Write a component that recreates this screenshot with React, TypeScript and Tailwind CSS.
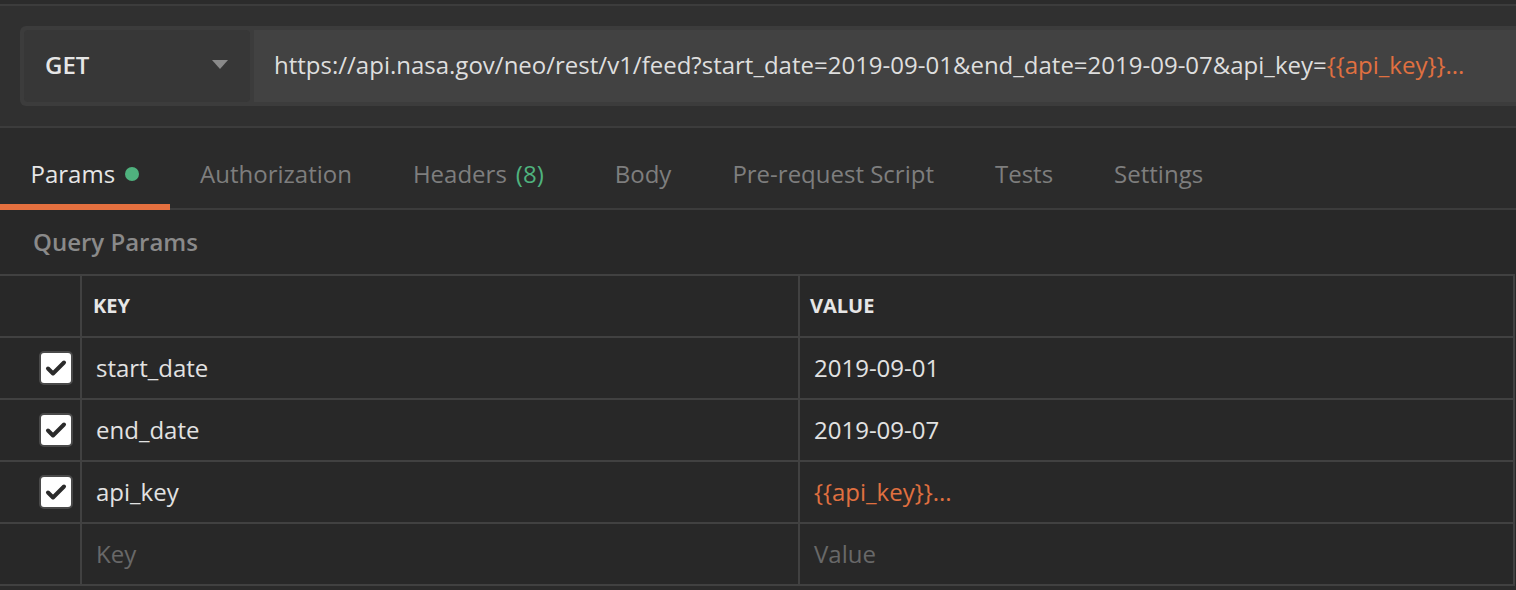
import React from "react";

const tabs = [
  { label: "Params", active: true, dot: true },
  { label: "Authorization" },
  { label: "Headers", count: "(8)" },
  { label: "Body" },
  { label: "Pre-request Script" },
  { label: "Tests" },
  { label: "Settings" },
];

const rows = [
  { key: "start_date", value: "2019-09-01" },
  { key: "end_date", value: "2019-09-07" },
  { key: "api_key", value: "{{api_key}}...", variable: true },
];

function Check() {
  return (
    <div className="w-[34px] h-[34px] rounded-[5px] bg-white border-2 border-[#4a4a4a] flex items-center justify-center">
      <svg width="24" height="24" viewBox="0 0 24 24">
        <path d="M4 12.5l5 5L20 6.5" fill="none" stroke="#2b2b2b" strokeWidth="4" strokeLinecap="round" strokeLinejoin="round" />
      </svg>
    </div>
  );
}

export default function App() {
  return (
    <div className="w-[1516px] h-[590px] overflow-hidden bg-[#2b2b2b] font-['Open_Sans',sans-serif]">
      <div className="h-1 bg-[#2b2b2b]" />
      {/* request bar */}
      <div className="h-[124px] bg-[#303030] border-t-2 border-b-2 border-[#3c3c3c] pt-[20px] pl-[20px]">
        <div className="flex h-[80px] bg-[#3c3c3c] rounded-l-[6px] p-1 pr-0">
          <div className="w-[226px] bg-[#373737] rounded-[4px] flex items-center justify-between pl-[21px] pr-[22px] pb-[2px]">
            <span className="text-[24px] font-semibold text-[#e6e6e6]">GET</span>
            <svg width="16" height="10" viewBox="0 0 16 10">
              <path d="M0 0h16L8 9z" fill="#8a8a8a" />
            </svg>
          </div>
          <div className="flex-1 ml-1 bg-[#424242] flex items-center pl-[20px] pb-[2px] text-[24px] text-[#dedede] whitespace-nowrap">
            https://api.nasa.gov/neo/rest/v1/feed?start_date=2019-09-01&amp;end_date=2019-09-07&amp;api_key=
            <span className="text-[#e07040]">{"{{api_key}}"}</span>
            <span className="text-[#e07040]">...</span>
          </div>
        </div>
      </div>

      {/* tabs */}
      <div className="flex h-[82px] bg-[#2b2b2b] border-b-2 border-[#3c3c3c]">
        {tabs.map((t) => (
          <div
            key={t.label}
            className={
              "flex items-center px-[30.5px] text-[24px] border-b-[6px] -mb-[2px] pt-[16px] " +
              (t.active ? "border-[#e5703f] text-[#e6e6e6]" : "border-transparent text-[#7e7e7e]")
            }
          >
            {t.label}
            {t.dot && <span className="ml-[10px] w-[14px] h-[14px] rounded-full bg-[#4fb27e]" />}
            {t.count && <span className="ml-[9px] mr-[10px] text-[#4fb27e]">{t.count}</span>}
          </div>
        ))}
      </div>

      <div className="bg-[#282828]">
        <div className="h-[64px] flex items-center pl-[33px] text-[24px] font-semibold text-[#8a8a8a]">Query Params</div>

        <div className="w-[1515px] border-t-2 border-r-2 border-[#414141] text-[24px]">
          <div className="flex h-[62px] border-b-2 border-[#414141]">
            <div className="w-[82px] border-r-2 border-[#414141]" />
            <div className="w-[718px] border-r-2 border-[#414141] flex items-center pl-[11px] text-[20px] font-bold text-[#e6e6e6]">KEY</div>
            <div className="flex-1 flex items-center pl-[10px] text-[20px] font-bold text-[#e6e6e6]">VALUE</div>
          </div>
          {rows.map((r) => (
            <div key={r.key} className="flex h-[62px] border-b-2 border-[#414141]">
              <div className="w-[82px] border-r-2 border-[#414141] flex items-center justify-end pr-[7px]">
                <Check />
              </div>
              <div className="w-[718px] border-r-2 border-[#414141] flex items-center pl-[14px] text-[#e2e2e2]">{r.key}</div>
              <div className={"flex-1 flex items-center pl-[14px] " + (r.variable ? "text-[#e07040]" : "text-[#e2e2e2]")}>
                {r.value}
              </div>
            </div>
          ))}
          <div className="flex h-[62px] border-b-2 border-[#414141]">
            <div className="w-[82px] border-r-2 border-[#414141]" />
            <div className="w-[718px] border-r-2 border-[#414141] flex items-center pl-[14px] text-[#686868]">Key</div>
            <div className="flex-1 flex items-center pl-[14px] text-[#686868]">Value</div>
          </div>
        </div>
      </div>
    </div>
  );
}
